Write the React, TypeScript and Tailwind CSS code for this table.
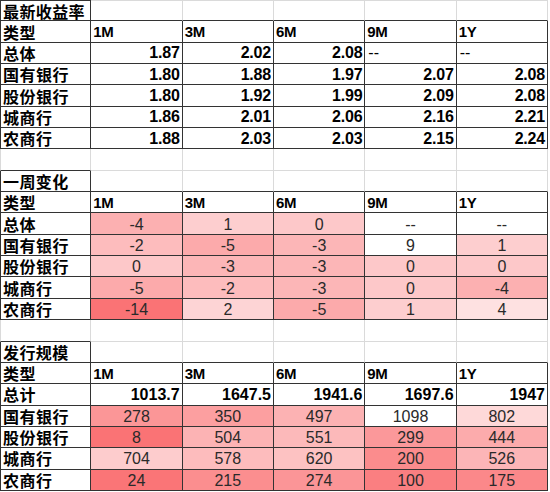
import React from "react";

type Row = { label: string; cells: { v: string; bg?: string }[] };

const LABEL_FONT = "font-['Noto_Sans_CJK_SC',sans-serif]";
const NUM_FONT = "font-['Liberation_Sans','Noto_Sans_CJK_SC',sans-serif]";
const COLS = ["1M", "3M", "6M", "9M", "1Y"];

// 最新收益率
const YIELD_ROWS: Row[] = [
  { label: "总体", cells: [{ v: "1.87" }, { v: "2.02" }, { v: "2.08" }, { v: "--" }, { v: "--" }] },
  { label: "国有银行", cells: [{ v: "1.80" }, { v: "1.88" }, { v: "1.97" }, { v: "2.07" }, { v: "2.08" }] },
  { label: "股份银行", cells: [{ v: "1.80" }, { v: "1.92" }, { v: "1.99" }, { v: "2.09" }, { v: "2.08" }] },
  { label: "城商行", cells: [{ v: "1.86" }, { v: "2.01" }, { v: "2.06" }, { v: "2.16" }, { v: "2.21" }] },
  { label: "农商行", cells: [{ v: "1.88" }, { v: "2.03" }, { v: "2.03" }, { v: "2.15" }, { v: "2.24" }] },
];

// 一周变化 (color scale, red = lowest)
const CHANGE_ROWS: Row[] = [
  {
    label: "总体",
    cells: [
      { v: "-4", bg: "bg-[#fcb0b1]" },
      { v: "1", bg: "bg-[#fdcecf]" },
      { v: "0", bg: "bg-[#fdc8c9]" },
      { v: "--" },
      { v: "--" },
    ],
  },
  {
    label: "国有银行",
    cells: [
      { v: "-2", bg: "bg-[#fdbcbd]" },
      { v: "-5", bg: "bg-[#fcaaab]" },
      { v: "-3", bg: "bg-[#fcb6b7]" },
      { v: "9" },
      { v: "1", bg: "bg-[#fdcecf]" },
    ],
  },
  {
    label: "股份银行",
    cells: [
      { v: "0", bg: "bg-[#fdc8c9]" },
      { v: "-3", bg: "bg-[#fcb6b7]" },
      { v: "-3", bg: "bg-[#fcb6b7]" },
      { v: "0", bg: "bg-[#fdc8c9]" },
      { v: "0", bg: "bg-[#fdc8c9]" },
    ],
  },
  {
    label: "城商行",
    cells: [
      { v: "-5", bg: "bg-[#fcaaab]" },
      { v: "-2", bg: "bg-[#fdbcbd]" },
      { v: "-3", bg: "bg-[#fcb6b7]" },
      { v: "0", bg: "bg-[#fdc8c9]" },
      { v: "-4", bg: "bg-[#fcb0b1]" },
    ],
  },
  {
    label: "农商行",
    cells: [
      { v: "-14", bg: "bg-[#fa7375]" },
      { v: "2", bg: "bg-[#fdd4d5]" },
      { v: "-5", bg: "bg-[#fcaaab]" },
      { v: "1", bg: "bg-[#fdcecf]" },
      { v: "4", bg: "bg-[#fee1e1]" },
    ],
  },
];

// 发行规模
const ISSUE_TOTAL = ["1013.7", "1647.5", "1941.6", "1697.6", "1947"];
const ISSUE_ROWS: Row[] = [
  {
    label: "国有银行",
    cells: [
      { v: "278", bg: "bg-[#fb9697]" },
      { v: "350", bg: "bg-[#fc9fa0]" },
      { v: "497", bg: "bg-[#fcb2b3]" },
      { v: "1098" },
      { v: "802", bg: "bg-[#fed9d9]" },
    ],
  },
  {
    label: "股份银行",
    cells: [
      { v: "8", bg: "bg-[#fa7375]" },
      { v: "504", bg: "bg-[#fcb3b4]" },
      { v: "551", bg: "bg-[#fcb9ba]" },
      { v: "299", bg: "bg-[#fb989a]" },
      { v: "444", bg: "bg-[#fcabac]" },
    ],
  },
  {
    label: "城商行",
    cells: [
      { v: "704", bg: "bg-[#fdcccd]" },
      { v: "578", bg: "bg-[#fdbcbd]" },
      { v: "620", bg: "bg-[#fdc2c2]" },
      { v: "200", bg: "bg-[#fb8c8d]" },
      { v: "526", bg: "bg-[#fcb5b7]" },
    ],
  },
  {
    label: "农商行",
    cells: [
      { v: "24", bg: "bg-[#fa7577]" },
      { v: "215", bg: "bg-[#fb8e8f]" },
      { v: "274", bg: "bg-[#fb9597]" },
      { v: "100", bg: "bg-[#fa7f81]" },
      { v: "175", bg: "bg-[#fb888a]" },
    ],
  },
];

const Label = ({ text }: { text: string }) => (
  <div
    className={`flex items-center border-r border-b border-l border-[#333] bg-white pl-[2px] text-[16px] leading-[18px] font-bold tracking-[0.5px] text-black ${LABEL_FONT}`}
  >
    {text}
  </div>
);

const SectionTitle = ({ text, first }: { text: string; first?: boolean }) => (
  <>
    <div
      className={`flex items-center border-r border-b border-l border-[#333] bg-white pl-[2px] text-[16px] leading-[18px] font-bold tracking-[0.4px] text-black ${LABEL_FONT} ${
        first ? "border-t" : ""
      }`}
    >
      {text}
    </div>
    {COLS.map((c) => (
      <div
        key={c}
        className={`border-r border-r-[#dadada] border-b border-b-[#333] ${first ? "border-t border-t-[#dadada]" : ""}`}
      />
    ))}
  </>
);

const HeaderRow = () => (
  <>
    <Label text="类型" />
    {COLS.map((c) => (
      <div
        key={c}
        className={`flex items-center border-r border-b border-[#333] bg-white pl-[2px] pt-[1px] text-[15px] leading-[18px] font-bold tracking-[-0.3px] text-black ${NUM_FONT}`}
      >
        {c}
      </div>
    ))}
  </>
);

const Spacer = () => (
  <>
    <div className="border-r border-r-[#dadada] border-b border-b-[#333] border-l border-l-[#dadada]" />
    {COLS.map((c) => (
      <div key={c} className="border-r border-b border-[#dadada]" />
    ))}
  </>
);

const App = () => {
  return (
    <div className="h-[492px] w-[550px] overflow-hidden bg-white">
      <div className="grid w-[548px] grid-cols-6 auto-rows-[21.35px]">
        {/* 最新收益率 */}
        <SectionTitle text="最新收益率" first />
        <HeaderRow />
        {YIELD_ROWS.map((row) => (
          <React.Fragment key={row.label}>
            <Label text={row.label} />
            {row.cells.map((cell, i) =>
              cell.v === "--" ? (
                <div
                  key={i}
                  className={`flex items-center border-r border-b border-[#333] pl-[3px] pt-[1px] text-[16px] leading-[18px] text-black ${NUM_FONT}`}
                >
                  --
                </div>
              ) : (
                <div
                  key={i}
                  className={`flex items-center justify-end border-r border-b border-[#333] pr-[2px] pt-[1px] text-[16px] leading-[18px] font-bold tracking-[-0.2px] text-black ${NUM_FONT}`}
                >
                  {cell.v}
                </div>
              )
            )}
          </React.Fragment>
        ))}
        <Spacer />

        {/* 一周变化 */}
        <SectionTitle text="一周变化" />
        <HeaderRow />
        {CHANGE_ROWS.map((row) => (
          <React.Fragment key={row.label}>
            <Label text={row.label} />
            {row.cells.map((cell, i) => (
              <div
                key={i}
                className={`flex items-center justify-center border-r border-b border-[#333] pt-[2px] text-[16px] leading-[18px] text-[#2a2a2a] ${NUM_FONT} ${
                  cell.bg ?? "bg-white"
                }`}
              >
                {cell.v}
              </div>
            ))}
          </React.Fragment>
        ))}
        <Spacer />

        {/* 发行规模 */}
        <SectionTitle text="发行规模" />
        <HeaderRow />
        <Label text="总计" />
        {ISSUE_TOTAL.map((v) => (
          <div
            key={v}
            className={`flex items-center justify-end border-r border-b border-[#333] bg-white pr-[2px] pt-[1px] text-[16px] leading-[18px] font-bold text-black ${NUM_FONT}`}
          >
            {v}
          </div>
        ))}
        {ISSUE_ROWS.map((row) => (
          <React.Fragment key={row.label}>
            <Label text={row.label} />
            {row.cells.map((cell, i) => (
              <div
                key={i}
                className={`flex items-center justify-center border-r border-b border-[#333] pt-[2px] text-[16px] leading-[18px] text-[#2a2a2a] ${NUM_FONT} ${
                  cell.bg ?? "bg-white"
                }`}
              >
                {cell.v}
              </div>
            ))}
          </React.Fragment>
        ))}
      </div>
    </div>
  );
};

export default App;
